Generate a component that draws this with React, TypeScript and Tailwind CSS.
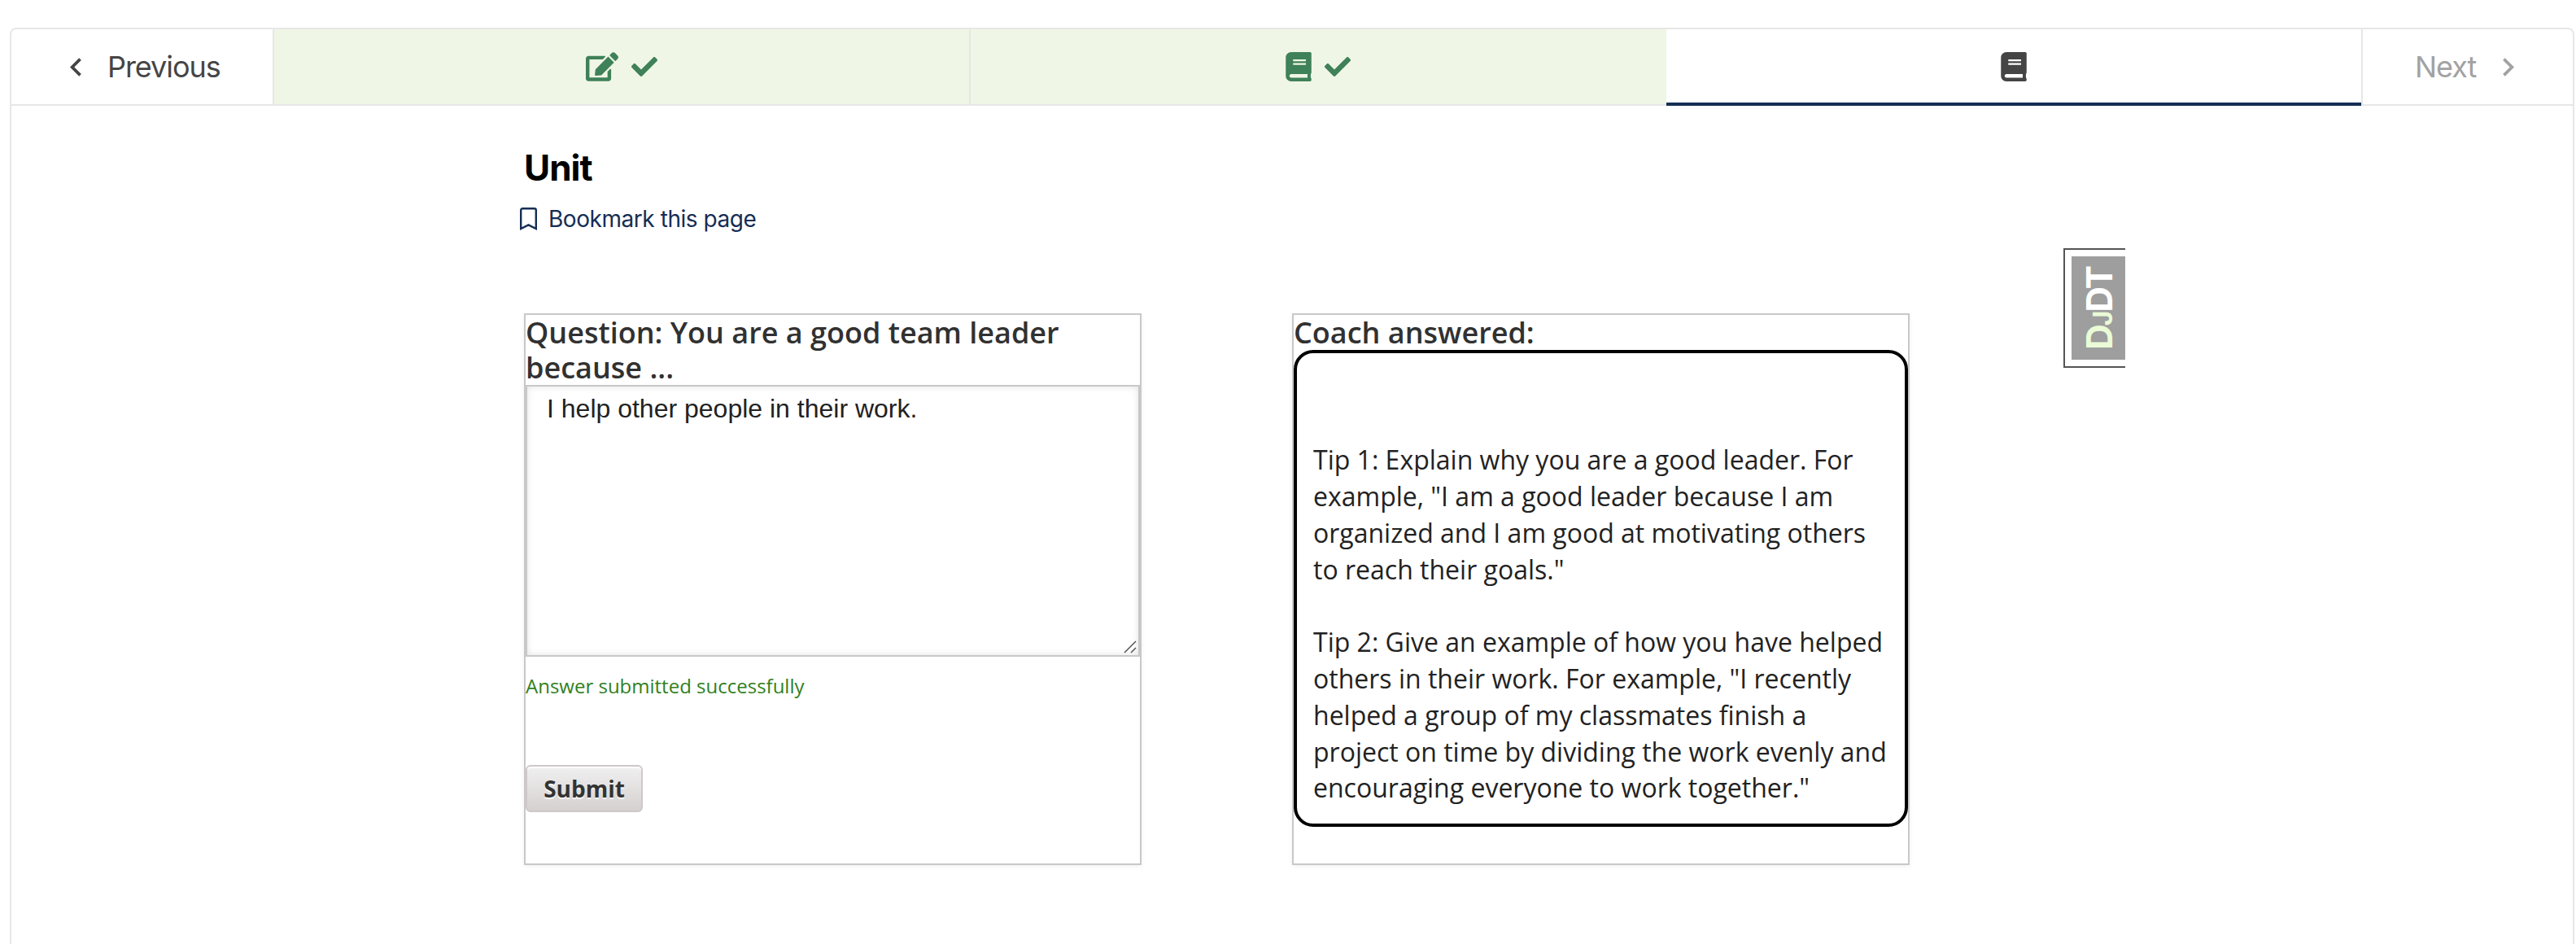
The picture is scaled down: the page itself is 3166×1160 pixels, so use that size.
import { FaBook, FaCheck, FaEdit } from "react-icons/fa";
import type { ReactNode } from "react";

function Chevron({ right = false }: { right?: boolean }) {
  return (
    <svg viewBox="0 0 24 24" className="h-[45px] w-[45px]" fill="currentColor" aria-hidden="true">
      {right ? (
        <path d="M10 6 8.59 7.41 13.17 12l-4.58 4.59L10 18l6-6z" />
      ) : (
        <path d="M15.41 7.41 14 6l-6 6 6 6 1.41-1.41L10.83 12z" />
      )}
    </svg>
  );
}

function Tab({ children, active = false }: { children: ReactNode; active?: boolean }) {
  return (
    <div
      className={
        active
          ? "flex flex-1 items-center justify-center border-b-4 border-[#152e54] pt-[2px] text-[#454545]"
          : "flex flex-1 items-center justify-center gap-4 border-b-2 border-l-2 border-[#e7e7e7] bg-[#f0f6e5] text-[#3f8158]"
      }
    >
      {children}
    </div>
  );
}

function SequenceNavigation() {
  return (
    <nav className="flex h-[94px] font-['Inter',sans-serif] text-[36px]">
      <button className="flex w-[321px] items-center border-b-2 border-[#e7e7e7] pl-[57px] text-[#454545]">
        <Chevron />
        <span className="ml-[16px] tracking-[-1.05px]">Previous</span>
      </button>
      <Tab>
        <FaEdit className="h-[36px] w-[40px]" />
        <FaCheck className="h-[32px] w-[32px]" />
      </Tab>
      <Tab>
        <FaBook className="h-[36px] w-[32px]" />
        <FaCheck className="h-[32px] w-[32px]" />
      </Tab>
      <Tab active>
        <FaBook className="h-[36px] w-[32px]" />
      </Tab>
      <button className="flex w-[260px] items-center border-b-2 border-l-2 border-[#e7e7e7] pl-[64px] text-[#a2a2a2]">
        <span className="tracking-[-1.05px]">Next</span>
        <span className="ml-[17px]">
          <Chevron right />
        </span>
      </button>
    </nav>
  );
}

function QuestionPanel() {
  return (
    <section className="h-[678px] w-[759px] border-2 border-[#c8c8c8] shadow-[0_2px_6px_rgba(0,0,0,0.06)]">
      <h3 className="text-[36px] leading-[43.2px] font-semibold text-[#313131]">
        Question: You are a good team leader because ...
      </h3>
      <div className="relative h-[334px] border-2 border-[#c8c8c8] pt-[5px] pl-[24px] font-['Liberation_Sans',Arial,sans-serif] text-[32px] leading-[44.8px] text-[#222222] shadow-[inset_0_0_8px_rgba(0,0,0,0.12)]">
        I help other people in their work.
        <svg viewBox="0 0 18 18" className="absolute right-px bottom-px h-[18px] w-[18px]" stroke="#555" strokeWidth="1.5" aria-hidden="true">
          <path d="M2 16 16 2M10 16l6-6" />
        </svg>
      </div>
      <p className="mt-[18px] text-[24px] leading-[36px] text-[#318021]">Answer submitted successfully</p>
      <button className="mt-[79px] block h-[58px] w-[144px] rounded-[6px] border-2 border-[#cfc8c8] bg-linear-to-b from-[#f0f0f0] to-[#d6d0d0] text-[28px] leading-[54px] font-bold text-[#333333] shadow-[inset_0_2px_0_#ffffff] [text-shadow:0_2px_0_#f8f8f8]">
        Submit
      </button>
    </section>
  );
}

function CoachPanel() {
  return (
    <section className="h-[678px] w-[759px] border-2 border-[#c8c8c8] shadow-[0_2px_6px_rgba(0,0,0,0.06)]">
      <h3 className="text-[36px] leading-[43.2px] font-semibold text-[#313131]">Coach answered:</h3>
      <div className="h-[586px] rounded-[24px] border-4 border-black px-5 pt-[109px] text-[32px] leading-[44.8px] text-[#222222]">
        <p>
          Tip 1: Explain why you are a good leader. For
          <br />
          example, "I am a good leader because I am
          <br />
          organized and I am good at motivating others
          <br />
          to reach their goals."
        </p>
        <p className="mt-[44.8px] whitespace-nowrap">
          Tip 2: Give an example of how you have helped
          <br />
          others in their work. For example, "I recently
          <br />
          helped a group of my classmates finish a
          <br />
          project on time by dividing the work evenly and
          <br />
          encouraging everyone to work together."
        </p>
      </div>
    </section>
  );
}

function DebugHandle() {
  return (
    <div className="absolute top-[305px] left-[2536px] h-[147px] w-[76px] border-2 border-r-0 border-[#555555] bg-white py-2 pl-2">
      <div className="flex h-full items-center justify-center bg-[#9e9e9e] pl-0.5">
        <span className="-rotate-90 font-['Inter',sans-serif] text-[44px] leading-none font-bold tracking-[-2px] whitespace-nowrap text-white">
          <span className="text-[#eafbd6]">
            D<span className="text-[32px]">J</span>
          </span>
          DT
        </span>
      </div>
    </div>
  );
}

export default function App() {
  return (
    <div className="relative h-[1160px] overflow-hidden bg-white pt-[34px] pr-[2px] pl-[12px] font-['Open_Sans',sans-serif]">
      <div className="h-[1140px] overflow-hidden rounded-[8px] border-2 border-[#e7e7e7]">
        <SequenceNavigation />
        <main className="pt-[48px] pl-[630px]">
          <h1 className="font-['Inter',sans-serif] text-[44px] leading-[56px] font-bold tracking-[-1px] text-black">Unit</h1>
          <button className="-ml-[5px] mt-[13px] flex h-[44px] items-center font-['Inter',sans-serif] text-[28px] text-[#152e54]">
            <svg viewBox="0 0 21 28" className="h-[28px] w-[21px]" fill="none" stroke="currentColor" strokeWidth="2.4" aria-hidden="true">
              <path d="M1.2 26V3.2a2 2 0 0 1 2-2h14.6a2 2 0 0 1 2 2V26l-9.3-4.6z" />
            </svg>
            <span className="ml-[14px] tracking-[-0.45px]">Bookmark this page</span>
          </button>
          <div className="mt-[94px] flex gap-[185px]">
            <QuestionPanel />
            <CoachPanel />
          </div>
        </main>
      </div>
      <DebugHandle />
    </div>
  );
}
